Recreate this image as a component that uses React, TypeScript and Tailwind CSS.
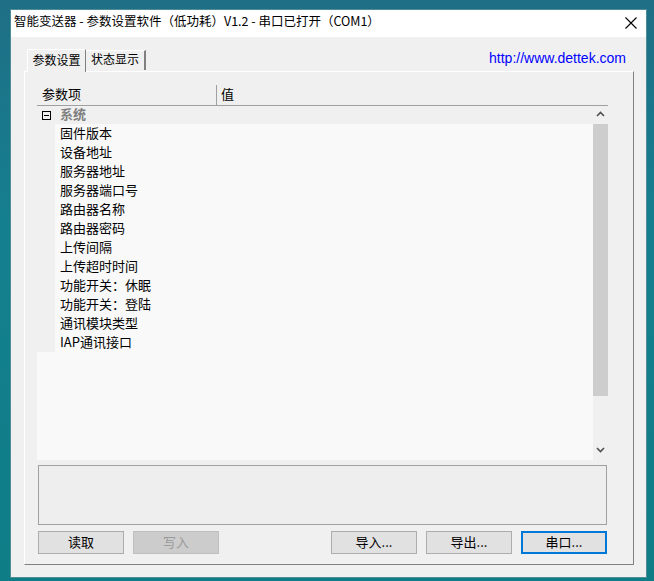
import React from "react";

const font = { fontFamily: '"Microsoft YaHei", "Noto Sans CJK SC", "Noto Sans", sans-serif' };

const items = [
  "固件版本",
  "设备地址",
  "服务器地址",
  "服务器端口号",
  "路由器名称",
  "路由器密码",
  "上传间隔",
  "上传超时时间",
  "功能开关：休眠",
  "功能开关：登陆",
  "通讯模块类型",
  "IAP通讯接口",
];

function Btn({ label, disabled, focused }: { label: string; disabled?: boolean; focused?: boolean }) {
  const base = "w-[86px] h-[23px] flex items-center justify-center pb-[3px] text-[13px] leading-none";
  if (disabled)
    return <div className={`${base} bg-[#cccccc] border border-[#bfbfbf] text-[#9a9a9a]`}>{label}</div>;
  if (focused)
    return <div className={`${base} bg-[#e1e1e1] border-2 border-[#0078d7] text-black`}>{label}</div>;
  return <div className={`${base} bg-[#e1e1e1] border border-[#adadad] text-black`}>{label}</div>;
}

export default function App() {
  return (
    <div
      className="w-[654px] h-[581px] overflow-hidden pl-[11px] pt-[10px] bg-[linear-gradient(180deg,#1f6f86_0%,#14808f_40%,#0e7d86_100%)]"
      style={font}
    >
      <div className="w-[635px] h-[567px] bg-[#f0f0f0] flex flex-col shadow-[0_0_0_1px_#4f8c96]">
        {/* title bar */}
        <div className="h-[27px] bg-white flex items-center pl-[3px] pr-[9px] pb-[5px] shrink-0">
          <span className="text-[12.5px] leading-none text-black">
            智能变送器 - 参数设置软件（低功耗）V1.2 - 串口已打开（COM1）
          </span>
          <div className="ml-auto w-[12px] h-[12px] mt-[4px]">
            <svg width="12" height="12" viewBox="0 0 12 12">
              <path d="M0.5 0.5 L11.5 11.5 M11.5 0.5 L0.5 11.5" stroke="#000" strokeWidth="1.1" fill="none" />
            </svg>
          </div>
        </div>

        {/* client */}
        <div className="flex-1 flex flex-col pl-[13px] pr-[12px] pt-[11px] pb-[13px]">
          {/* tabs row */}
          <div className="h-[23px] flex items-end shrink-0 pl-[3px]">
            <div className="h-[23px] w-[59px] flex items-center justify-center pb-[3px] text-[12px] leading-none border-t border-l border-white border-r border-r-[#808080] bg-[#f0f0f0] relative z-10 mb-[-1px]">
              参数设置
            </div>
            <div className="h-[20px] w-[60px] flex items-center justify-center pb-[3px] text-[12px] leading-none border-t border-white border-r-2 border-r-[#808080] mb-[1px]">
              状态显示
            </div>
            <a
              className="ml-auto mb-[6px] text-[14px] leading-none text-[#0000ff] pr-[8px]"
              style={{ fontFamily: '"Liberation Sans", "Noto Sans", sans-serif' }}
            >
              http://www.dettek.com
            </a>
          </div>

          {/* panel */}
          <div className="flex-1 flex flex-col border-t border-l border-white border-r border-b border-r-[#808080] border-b-[#808080] pl-[12px] pr-[25px] pt-[13px] pb-[10px]">
            {/* property grid */}
            <div className="h-[375px] flex flex-col shrink-0">
              <div className="h-[21px] flex border-b border-[#a0a0a0] text-[13px] leading-none shrink-0">
                <div className="w-[180px] border-r border-[#a0a0a0] flex items-center pl-[5px] pb-[3px]">参数项</div>
                <div className="flex items-center pl-[4px] pb-[3px]">值</div>
              </div>
              <div className="flex-1 flex">
                <div className="flex-1 flex flex-col bg-[#f9f9f9]">
                  <div className="h-[18px] bg-[#f0f0f0] flex items-center pl-[5px] shrink-0">
                    <div className="w-[9px] h-[9px] border border-black flex items-center justify-center">
                      <div className="w-[5px] h-[1px] bg-black" />
                    </div>
                    <span className="ml-[9px] mb-[3px] text-[13px] leading-none font-bold text-[#808080]">系统</span>
                  </div>
                  {items.map((t) => (
                    <div key={t} className="h-[19px] flex shrink-0">
                      <div className="w-[18px] bg-[#f0f0f0]" />
                      <div className="flex items-center pl-[5px] pb-[3px] text-[13px] leading-none text-black">{t}</div>
                    </div>
                  ))}
                </div>
                {/* scrollbar */}
                <div className="w-[15px] bg-[#f0f0f0] flex flex-col items-center">
                  <div className="h-[18px] flex items-center justify-center pb-[2px]">
                    <svg width="9" height="6" viewBox="0 0 9 6">
                      <path d="M1 5 L4.5 1.5 L8 5" stroke="#505050" strokeWidth="1.6" fill="none" />
                    </svg>
                  </div>
                  <div className="w-[15px] h-[272px] bg-[#cdcdcd]" />
                  <div className="flex-1" />
                  <div className="h-[18px] flex items-center justify-center pb-[3px]">
                    <svg width="9" height="6" viewBox="0 0 9 6">
                      <path d="M1 1 L4.5 4.5 L8 1" stroke="#505050" strokeWidth="1.6" fill="none" />
                    </svg>
                  </div>
                </div>
              </div>
            </div>

            {/* description */}
            <div className="mt-[5px] ml-[1px] mr-[1px] h-[60px] border border-[#a0a0a0] bg-[#eeeeee] shrink-0" />

            {/* buttons */}
            <div className="mt-[6px] ml-[1px] mr-[1px] flex gap-[9px]">
              <Btn label="读取" />
              <Btn label="写入" disabled />
              <div className="flex-1" />
              <Btn label="导入..." />
              <Btn label="导出..." />
              <Btn label="串口..." focused />
            </div>
          </div>
        </div>
      </div>
    </div>
  );
}
